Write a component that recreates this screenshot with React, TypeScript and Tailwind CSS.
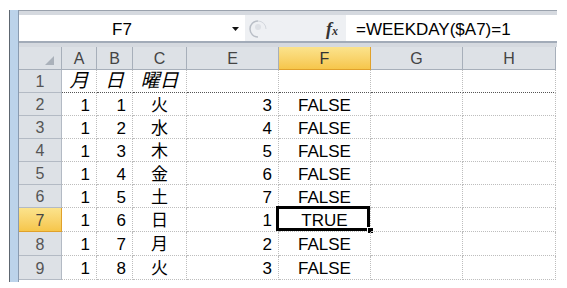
import React from "react";

const COLS = [
  { key: "A", w: 35, align: "right" },
  { key: "B", w: 36, align: "right" },
  { key: "C", w: 54, align: "center" },
  { key: "E", w: 92, align: "right" },
  { key: "F", w: 92, align: "center" },
  { key: "G", w: 92, align: "center" },
  { key: "H", w: 93, align: "center" },
];

const ROWS: { n: number; h: number; cells: string[] }[] = [
  { n: 1, h: 23, cells: ["月", "日", "曜日", "", ""] },
  { n: 2, h: 23, cells: ["1", "1", "火", "3", "FALSE"] },
  { n: 3, h: 23, cells: ["1", "2", "水", "4", "FALSE"] },
  { n: 4, h: 23, cells: ["1", "3", "木", "5", "FALSE"] },
  { n: 5, h: 23, cells: ["1", "4", "金", "6", "FALSE"] },
  { n: 6, h: 23, cells: ["1", "5", "土", "7", "FALSE"] },
  { n: 7, h: 24, cells: ["1", "6", "日", "1", "TRUE"] },
  { n: 8, h: 24, cells: ["1", "7", "月", "2", "FALSE"] },
  { n: 9, h: 24, cells: ["1", "8", "火", "3", "FALSE"] },
];

const FONT = {
  fontFamily: '"Liberation Sans", "Noto Sans CJK JP", sans-serif',
};

function FormulaBar() {
  return (
    <div>
      <div className="h-[5px] border-t border-[#9aa2ad] bg-[#d5d9df]" />
      <div className="flex h-[26px]">
        <div className="flex w-[206px] items-center justify-center bg-white pt-[4px] text-[17px] text-black">
          F7
        </div>
        <div className="flex w-[20px] items-center justify-center bg-white pt-[2px]">
          <svg width="7" height="4" viewBox="0 0 7 4">
            <path d="M0 0h7L3.5 4z" fill="#111" />
          </svg>
        </div>
        <div className="flex w-[101px] items-center bg-[#eef0f3]">
          <svg width="20" height="18" viewBox="0 0 20 18" className="mt-[2px] ml-[3px]">
            <path
              d="M10 1a8 8 0 0 0 0 16"
              fill="none"
              stroke="#b9bec6"
              strokeWidth="1.5"
            />
            <path d="M10 1a8 8 0 0 1 8 8" fill="none" stroke="#d3d7dd" strokeWidth="1" />
            <circle cx="10" cy="7" r="3" fill="#dde0e5" />
          </svg>
          <span
            className="ml-auto mr-[8px] pt-[2px] text-[18px] font-bold italic text-[#333]"
            style={{ fontFamily: '"Liberation Serif", serif' }}
          >
            f<span className="text-[12px]">x</span>
          </span>
        </div>
        <div className="flex flex-1 items-center bg-white pl-[10px] pt-[4px] text-[17px] text-black">
          =WEEKDAY($A7)=1
        </div>
      </div>
      <div className="h-[6px] border-t-2 border-[#a2abb8] bg-[#d5d9df]" />
    </div>
  );
}

function HeaderRow() {
  return (
    <div className="flex h-[23px]">
      <div className="relative w-[43px] border-r border-b border-[#a7afba] bg-[#dde1e6]">
        <svg width="9" height="9" viewBox="0 0 9 9" className="absolute right-[7px] bottom-[4px]">
          <path d="M9 0v9H0z" fill="#aab1ba" />
        </svg>
      </div>
      {COLS.map((c) => {
        const active = c.key === "F";
        return (
          <div
            key={c.key}
            style={{ width: c.w }}
            className={
              active
                ? "flex items-center justify-center border-r border-b border-[#e0a12b] bg-gradient-to-b from-[#fbe38c] to-[#f6c64a] pt-[2px] text-[16px] text-[#333]"
                : "flex items-center justify-center border-r border-b border-[#a7afba] bg-[#dde1e6] pt-[2px] text-[16px] text-[#444]"
            }
          >
            {c.key}
          </div>
        );
      })}
    </div>
  );
}

function DataRow({ row }: { row: (typeof ROWS)[number] }) {
  const activeRow = row.n === 7;
  return (
    <div className="flex" style={{ height: row.h }}>
      <div
        className={
          activeRow
            ? "flex w-[43px] items-center justify-center border-r border-b border-[#e0a12b] bg-gradient-to-b from-[#fbe38c] to-[#f6c64a] pt-[2px] text-[16px] text-[#444]"
            : "flex w-[43px] items-center justify-center border-r border-b border-[#b3bac4] bg-[#dde1e6] pt-[2px] text-[16px] text-[#555]"
        }
      >
        {row.n}
      </div>
      {COLS.map((c, i) => {
        const value = row.cells[i] ?? "";
        const header = row.n === 1;
        const selected = activeRow && c.key === "F";
        const justify =
          header || c.align === "center"
            ? "justify-center"
            : "justify-end pr-[6px]";
        return (
          <div
            key={c.key}
            style={{ width: c.w }}
            className={
              header
                ? `relative flex items-center ${justify} border-r border-dotted border-r-[#bdbdbd] border-b border-b-[#555] pt-[1px] text-[19px] italic text-black`
                : `relative flex items-center ${justify} border-r border-b border-dotted border-[#bdbdbd] pt-[3px] text-[17px] text-black`
            }
          >
            {value}
            {selected && (
              <>
                <div className="pointer-events-none absolute -top-[2px] -left-[3px] h-[25px] w-[94px] border-[3px] border-black" />
                <div className="absolute -right-[4px] -bottom-[3px] h-[7px] w-[7px] border border-white bg-black" />
              </>
            )}
          </div>
        );
      })}
    </div>
  );
}

export default function App() {
  return (
    <div className="h-[288px] w-[567px] overflow-hidden bg-white" style={FONT}>
      <div className="mt-[10px] ml-[9px] flex w-[548px]">
        <div className="h-[272px] w-[10px] border-l border-r border-l-[#5d6670] border-r-[#8a9bb0] bg-[#bcd3ea]" />
        <div className="w-[538px]">
          <FormulaBar />
          <HeaderRow />
          {ROWS.map((r) => (
            <DataRow key={r.n} row={r} />
          ))}
        </div>
      </div>
    </div>
  );
}
